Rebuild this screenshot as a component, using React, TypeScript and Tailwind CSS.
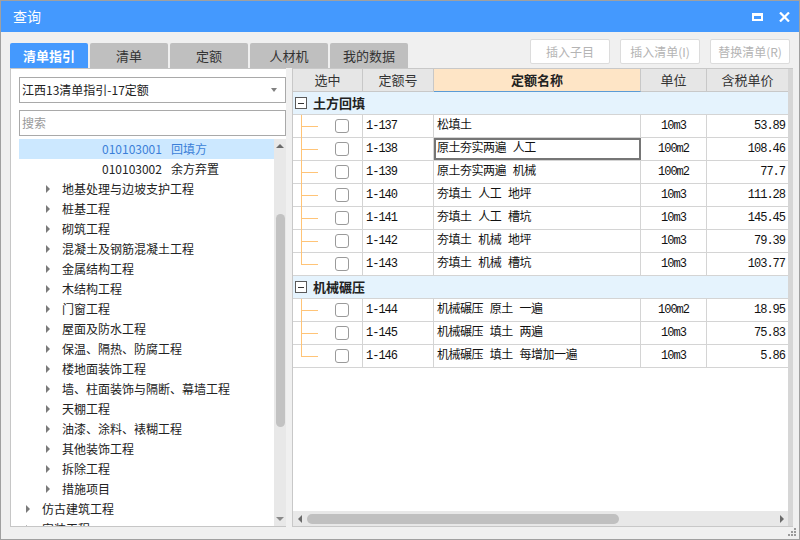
import React from 'react';

type TreeItem = { level: 1 | 2 | 3; code?: string; name: string; selected?: boolean };

const tree: TreeItem[] = [
  { level: 3, code: '010103001', name: '回填方', selected: true },
  { level: 3, code: '010103002', name: '余方弃置' },
  { level: 2, name: '地基处理与边坡支护工程' },
  { level: 2, name: '桩基工程' },
  { level: 2, name: '砌筑工程' },
  { level: 2, name: '混凝土及钢筋混凝土工程' },
  { level: 2, name: '金属结构工程' },
  { level: 2, name: '木结构工程' },
  { level: 2, name: '门窗工程' },
  { level: 2, name: '屋面及防水工程' },
  { level: 2, name: '保温、隔热、防腐工程' },
  { level: 2, name: '楼地面装饰工程' },
  { level: 2, name: '墙、柱面装饰与隔断、幕墙工程' },
  { level: 2, name: '天棚工程' },
  { level: 2, name: '油漆、涂料、裱糊工程' },
  { level: 2, name: '其他装饰工程' },
  { level: 2, name: '拆除工程' },
  { level: 2, name: '措施项目' },
  { level: 1, name: '仿古建筑工程' },
  { level: 1, name: '安装工程' },
];

type Row = { code: string; name: string; unit: string; price: string };
type Group = { title: string; rows: Row[] };

const groups: Group[] = [
  {
    title: '土方回填',
    rows: [
      { code: '1-137', name: '松填土', unit: '10m3', price: '53.89' },
      { code: '1-138', name: '原土夯实两遍 人工', unit: '100m2', price: '108.46' },
      { code: '1-139', name: '原土夯实两遍 机械', unit: '100m2', price: '77.7' },
      { code: '1-140', name: '夯填土 人工 地坪', unit: '10m3', price: '111.28' },
      { code: '1-141', name: '夯填土 人工 槽坑', unit: '10m3', price: '145.45' },
      { code: '1-142', name: '夯填土 机械 地坪', unit: '10m3', price: '79.39' },
      { code: '1-143', name: '夯填土 机械 槽坑', unit: '10m3', price: '103.77' },
    ],
  },
  {
    title: '机械碾压',
    rows: [
      { code: '1-144', name: '机械碾压 原土 一遍', unit: '100m2', price: '18.95' },
      { code: '1-145', name: '机械碾压 填土 两遍', unit: '10m3', price: '75.83' },
      { code: '1-146', name: '机械碾压 填土 每增加一遍', unit: '10m3', price: '5.86' },
    ],
  },
];

const tabs = ['清单指引', '清单', '定额', '人材机', '我的数据'];
const buttons = ['插入子目', '插入清单(I)', '替换清单(R)'];

function Arrow() {
  return <div className="w-0 h-0 border-y-[4px] border-y-transparent border-l-[4px] border-l-[#7a7a7a]" />;
}

function TreeRow({ item }: { item: TreeItem }) {
  if (item.level === 3) {
    return (
      <div
        className={`h-[20px] flex items-center pl-[83px] shrink-0 ${
          item.selected ? 'bg-[#cce8ff] text-[#3b7fd8]' : 'text-[#222]'
        }`}
      >
        <span>{item.code}</span>
        <span className="ml-[9px]">{item.name}</span>
      </div>
    );
  }
  return (
    <div className={`h-[20px] flex items-center shrink-0 text-[#222] ${item.level === 2 ? 'pl-[27px]' : 'pl-[7px]'}`}>
      <Arrow />
      <span className="ml-[12px]">{item.name}</span>
    </div>
  );
}

function TreeLines({ last }: { last: boolean }) {
  return (
    <svg width="30" height="23" className="shrink-0">
      <line x1="8.5" y1="0" x2="8.5" y2={last ? 12 : 23} stroke="#ffc477" strokeWidth="1" />
      <line x1="8" y1="11.5" x2="25" y2="11.5" stroke="#ffc477" strokeWidth="1" />
    </svg>
  );
}

export default function App() {
  return (
    <div className="w-[800px] h-[540px] border border-[#a0a0a0] flex flex-col font-['Noto_Sans_CJK_SC',sans-serif] text-[12px] overflow-hidden">
      {/* title bar */}
      <div className="h-[31px] bg-[#4499fe] flex items-center pl-[12px] pr-[8px] shrink-0">
        <span className="text-white text-[14px]">查询</span>
        <div className="flex-1" />
        <div className="w-[11px] h-[8px] border-2 border-t-[3px] border-white" />
        <svg width="11" height="10" className="ml-[16px] mr-[1px]" viewBox="0 0 11 10">
          <path d="M1 0.5 L10 9.5 M10 0.5 L1 9.5" stroke="white" strokeWidth="2.2" />
        </svg>
      </div>

      {/* body */}
      <div className="flex-1 min-h-0 bg-[#f0f0f0] flex flex-col pl-[9px] pt-[7px] pb-[12px] relative">
        <div className="h-[29px] flex shrink-0 pr-[9px]">
          <div className="flex items-end gap-[2px]">
            {tabs.map((t, i) => (
              <div
                key={t}
                className={`w-[78px] h-[25px] rounded-t-[2px] flex items-center justify-center text-[13px] ${
                  i === 0 ? 'bg-[#4499fe] text-white font-bold' : 'bg-[#bfbfbf] text-[#333]'
                }`}
              >
                {t}
              </div>
            ))}
          </div>
          <div className="flex-1" />
          <div className="flex items-start gap-[10px]">
            {buttons.map((b) => (
              <div
                key={b}
                className="w-[80px] h-[25px] bg-white border border-[#dcdcdc] rounded-[2px] flex items-center justify-center text-[#b4b4b4] text-[12px]"
              >
                {b}
              </div>
            ))}
          </div>
        </div>

        <div className="flex-1 flex gap-[6px] min-h-0">
          {/* left panel */}
          <div className="w-[276px] bg-white border-l border-t border-b border-[#c6c6c6] flex flex-col min-h-0">
            <div className="ml-[8px] mt-[8px] h-[26px] border border-[#a9a9a9] flex items-center pl-[2px] pr-[8px] text-[#222] shrink-0">
              <span>江西13清单指引-17定额</span>
              <div className="flex-1" />
              <div className="w-0 h-0 border-x-[3px] border-x-transparent border-t-[4px] border-t-[#808080]" />
            </div>
            <div className="ml-[8px] mt-[7px] h-[26px] border border-[#a9a9a9] flex items-center pl-[2px] text-[#9a9a9a] shrink-0">
              搜索
            </div>
            <div className="ml-[8px] mt-[3px] flex-1 flex min-h-0 overflow-hidden">
              <div className="flex-1 flex flex-col overflow-hidden">
                {tree.map((it) => (
                  <TreeRow key={it.name} item={it} />
                ))}
              </div>
              <div className="w-[12px] bg-[#e8e8e8] flex flex-col items-center">
                <div className="h-[14px] flex items-center justify-center shrink-0">
                  <div className="w-0 h-0 border-x-[4px] border-x-transparent border-b-[4px] border-b-[#6a6a6a]" />
                </div>
                <div className="h-[61px] shrink-0" />
                <div className="w-[9px] h-[213px] rounded-full bg-[#c2c2c2] shrink-0" />
                <div className="flex-1" />
                <div className="h-[14px] flex items-center justify-center shrink-0">
                  <div className="w-0 h-0 border-x-[4px] border-x-transparent border-t-[4px] border-t-[#8a8a8a]" />
                </div>
              </div>
            </div>
          </div>

          {/* right panel */}
          <div className="w-[501px] bg-white border-l border-t border-b border-[#c8c8c8] flex min-h-0">
            <div className="w-[495px] flex flex-col">
              {/* header */}
              <div className="h-[23px] flex shrink-0 text-[13px] text-[#333]">
                <div className="w-[70px] bg-[#e6e6e6] border-r border-b border-[#c8c8c8] flex items-center justify-center">选中</div>
                <div className="w-[71px] bg-[#e6e6e6] border-r border-b border-[#c8c8c8] flex items-center justify-center">定额号</div>
                <div className="w-[207px] bg-[#fee5c6] border-r border-[#c8c8c8] border-b border-b-[#5b9bd5] flex items-center justify-center font-bold text-[#222]">定额名称</div>
                <div className="w-[66px] bg-[#e6e6e6] border-r border-b border-[#c8c8c8] flex items-center justify-center">单位</div>
                <div className="w-[81px] bg-[#e6e6e6] border-b border-[#c8c8c8] flex items-center justify-center">含税单价</div>
              </div>

              {groups.map((g) => (
                <React.Fragment key={g.title}>
                  <div className="h-[23px] bg-[#e5f3fd] border-b border-[#d4d4d4] flex items-center pl-[2px] shrink-0">
                    <div className="w-[12px] h-[12px] border border-[#5a5a5a] bg-white flex items-center justify-center">
                      <div className="w-[6px] h-[1px] bg-[#333]" />
                    </div>
                    <span className="ml-[6px] font-bold text-[13px] text-[#222]">{g.title}</span>
                  </div>
                  {g.rows.map((r, i) => (
                    <div key={r.code} className="h-[23px] flex border-b border-[#d4d4d4] shrink-0 text-[#111]">
                      <div className="w-[70px] border-r border-[#d4d4d4] flex items-center">
                        <TreeLines last={i === g.rows.length - 1} />
                        <div className="ml-[12px] w-[14px] h-[14px] border border-[#9a9a9a] rounded-[3px] bg-white" />
                      </div>
                      <div className="w-[71px] border-r border-[#d4d4d4] flex items-center pl-[3px] font-['Liberation_Mono',monospace] text-[12px] tracking-[-1px]">
                        {r.code}
                      </div>
                      <div
                        className={`w-[207px] border-r border-[#d4d4d4] flex items-center pl-[3px] whitespace-pre font-['Liberation_Mono','Noto_Sans_CJK_SC',monospace] tracking-[-0.5px] ${
                          r.code === '1-138' ? 'outline-2 -outline-offset-2 outline-[#767676]' : ''
                        }`}
                      >
                        {r.name}
                      </div>
                      <div className="w-[66px] border-r border-[#d4d4d4] flex items-center justify-center font-['Liberation_Mono',monospace] text-[12px] tracking-[-1px]">
                        {r.unit}
                      </div>
                      <div className="w-[81px] flex items-center justify-end pr-[3px] font-['Liberation_Mono',monospace] text-[12px] tracking-[-1px]">
                        {r.price}
                      </div>
                    </div>
                  ))}
                </React.Fragment>
              ))}

              <div className="flex-1" />

              {/* horizontal scrollbar */}
              <div className="h-[15px] bg-[#e8e8e8] flex items-center shrink-0 pl-[5px] pr-[4px]">
                <div className="w-0 h-0 border-y-[4px] border-y-transparent border-r-[4px] border-r-[#6a6a6a]" />
                <div className="ml-[5px] w-[312px] h-[10px] rounded-full bg-[#c0c0c0]" />
                <div className="flex-1" />
                <div className="w-0 h-0 border-y-[4px] border-y-transparent border-l-[4px] border-l-[#6a6a6a]" />
              </div>
            </div>
            <div className="flex-1 bg-[#d6d6d6]" />
          </div>
        </div>

        {/* resize grip */}
        <svg width="9" height="9" className="absolute right-[2px] bottom-[2px]">
          <rect x="6" y="0" width="2" height="2" fill="#9a9a9a" />
          <rect x="3" y="3" width="2" height="2" fill="#9a9a9a" />
          <rect x="6" y="3" width="2" height="2" fill="#9a9a9a" />
          <rect x="0" y="6" width="2" height="2" fill="#9a9a9a" />
          <rect x="3" y="6" width="2" height="2" fill="#9a9a9a" />
          <rect x="6" y="6" width="2" height="2" fill="#9a9a9a" />
        </svg>
      </div>
    </div>
  );
}
